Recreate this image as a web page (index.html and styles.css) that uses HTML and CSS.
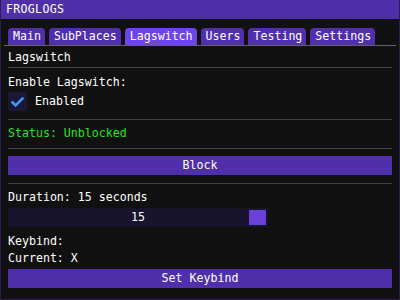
FILE: index.html
```html
<!DOCTYPE html>
<html lang="en">
<head>
  <meta charset="UTF-8">
  <meta name="viewport" content="width=device-width, initial-scale=1.0">
  <title>FROGLOGS</title>
  <link rel="stylesheet" href="styles.css">
</head>
<body>
  <div class="window">
    <div class="titlebar">FROGLOGS</div>

    <div class="content">
      <div class="tabbar">
        <div class="tab">Main</div>
        <div class="tab">SubPlaces</div>
        <div class="tab active">Lagswitch</div>
        <div class="tab">Users</div>
        <div class="tab">Testing</div>
        <div class="tab">Settings</div>
      </div>

      <div class="line title-line">Lagswitch</div>
      <div class="sep sep-1"></div>

      <div class="line enable-label">Enable Lagswitch:</div>
      <div class="checkbox-row">
        <div class="checkbox">
          <svg width="19" height="19" viewBox="0 0 19 19">
            <polyline points="3.65,9.5 7.55,13.4 15.35,5.6" fill="none" stroke="#4296fa" stroke-width="2.6" stroke-linecap="butt" stroke-linejoin="miter"/>
          </svg>
        </div>
        <span>Enabled</span>
      </div>
      <div class="sep sep-2"></div>

      <div class="line status">Status: Unblocked</div>
      <div class="sep sep-3"></div>

      <button class="btn block-btn">Block</button>
      <div class="sep sep-4"></div>

      <div class="line duration">Duration: 15 seconds</div>
      <div class="slider">
        <span class="slider-value">15</span>
        <div class="grab"></div>
      </div>

      <div class="line keybind">Keybind:</div>
      <div class="line current">Current: X</div>
      <button class="btn keybind-btn">Set Keybind</button>
    </div>
  </div>
</body>
</html>
```

FILE: styles.css
```css
body {
  margin: 0;
  padding: 0;
  background: #111111;
  font-family: 'DejaVu Sans Mono', 'Liberation Mono', monospace;
  font-size: 11.6px;
  line-height: 13px;
  color: #ffffff;
}

.window {
  width: 400px;
  height: 300px;
  box-sizing: border-box;
  border: 1px solid #2b1d5c;
  border-top: none;
  background: #111111;
  overflow: hidden;
}

.titlebar {
  height: 19px;
  margin: 0 -1px;
  padding-left: 6px;
  background: #5030aa;
  line-height: 19px;
  letter-spacing: 0.3px;
}

.content {
  padding: 0 7px;
}

.tabbar {
  display: flex;
  gap: 4px;
  margin: 9px -4px 0;
  padding-left: 4px;
  border-bottom: 1px solid #6c45e4;
}

.tab {
  height: 17px;
  padding: 0 4px 0 5px;
  background: #5030aa;
  border-radius: 4px 4px 0 0;
  line-height: 17px;
}

.tab.active {
  background: #6c45e4;
}

.line {
  height: 13px;
}

.title-line { margin-top: 5px; }

.sep {
  height: 1px;
  background: #3f3f47;
}

.sep-1 { margin-top: 3px; }
.enable-label { margin-top: 8px; }

.checkbox-row {
  display: flex;
  align-items: center;
  gap: 8px;
  margin-top: 3px;
  height: 19px;
}

.checkbox {
  width: 19px;
  height: 19px;
  background: #1b1736;
}

.checkbox svg {
  display: block;
}

.sep-2 { margin-top: 8px; }

.status {
  margin-top: 7px;
  color: #22e622;
}

.sep-3 { margin-top: 8px; }

.btn {
  display: block;
  width: 100%;
  height: 19px;
  padding: 0;
  border: none;
  background: #5030aa;
  color: #ffffff;
  font: inherit;
  line-height: 19px;
  text-align: center;
}

.block-btn { margin-top: 7px; }
.sep-4 { margin-top: 8px; }
.duration { margin-top: 7px; }

.slider {
  display: flex;
  align-items: center;
  justify-content: center;
  position: relative;
  width: 260px;
  height: 19px;
  margin-top: 4px;
  background: #18142e;
}

.grab {
  position: absolute;
  top: 2px;
  right: 2px;
  width: 17px;
  height: 15px;
  background: #6a40d8;
}

.keybind { margin-top: 8px; }
.current { margin-top: 4px; }
.keybind-btn { margin-top: 4px; }
```
